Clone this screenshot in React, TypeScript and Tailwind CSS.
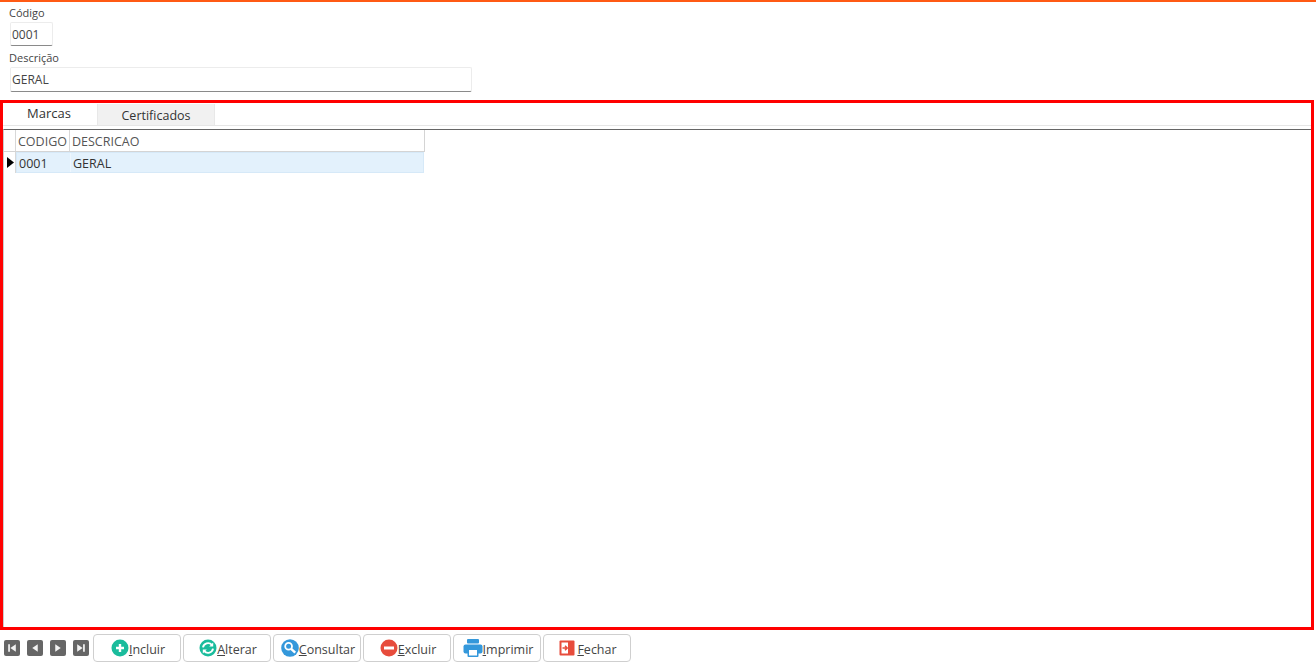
const font = { fontFamily: '"Open Sans", "Noto Sans", sans-serif' };

function Nav({ d }: { d: string }) {
  return (
    <div className="w-[16px] h-[16px] rounded-[2px] bg-[#666666] flex items-center justify-center">
      <svg width="12" height="12" viewBox="0 0 11 11" fill="#f2f2f2"><path d={d} /></svg>
    </div>
  );
}

function Btn({ icon, u, rest }: { icon: React.ReactNode; u: string; rest: string }) {
  return (
    <div className="w-[88px] h-[28px] shrink-0 rounded-[4px] border border-[#cfcfcf] bg-white flex items-center justify-center pl-[2px] text-[12.5px] text-[#444444]">
      {icon}
      <span className="mt-[4px]"><span className="underline">{u}</span>{rest}</span>
    </div>
  );
}

const IncluirIcon = (
  <svg width="18" height="18" viewBox="0 0 18 18"><circle cx="9" cy="9" r="8.5" fill="#1abc9c" /><path d="M9 5v8M5 9h8" stroke="#fff" strokeWidth="2.4" /></svg>
);
const AlterarIcon = (
  <svg width="18" height="18" viewBox="0 0 18 18"><circle cx="9" cy="9" r="8.5" fill="#1abc9c" /><path d="M4 8.4A5.1 5.1 0 0 1 12.8 5.8M14 9.6A5.1 5.1 0 0 1 5.2 12.2" fill="none" stroke="#fff" strokeWidth="1.9" /><path d="M14.2 3.4v4h-4zM3.8 14.6v-4h4z" fill="#fff" /></svg>
);
const ConsultarIcon = (
  <svg width="18" height="18" viewBox="0 0 18 18"><circle cx="9" cy="9" r="8.8" fill="#3498db" /><circle cx="7.6" cy="7.2" r="3.4" fill="none" stroke="#fff" strokeWidth="1.8" /><path d="M10.2 9.8l4 3.8" stroke="#fff" strokeWidth="2.4" /></svg>
);
const ExcluirIcon = (
  <svg width="18" height="18" viewBox="0 0 18 18"><circle cx="9" cy="9" r="8.5" fill="#e74c3c" /><rect x="4" y="7.5" width="10" height="3" fill="#fff" /></svg>
);
const ImprimirIcon = (
  <svg width="20" height="20" viewBox="0 0 20 20"><rect x="4" y="1" width="12" height="4.5" rx="1" fill="#3498db" /><rect x="0.5" y="6.5" width="19" height="9" rx="2" fill="#3498db" /><rect x="4.5" y="11.5" width="11" height="7.5" rx="1" fill="#3498db" /><rect x="6" y="12" width="8" height="5.5" fill="#fff" /></svg>
);
const FecharIcon = (
  <svg width="16" height="16" viewBox="0 0 16 16" className="mr-[2px]"><rect x="0.5" y="0.5" width="15" height="15" rx="1" fill="#e74c3c" /><rect x="2.5" y="2.5" width="6.5" height="11" fill="#fff" /><path d="M3.5 8h4M6 5.8L8.2 8 6 10.2" fill="none" stroke="#e74c3c" strokeWidth="1.5" /></svg>
);

export default function App() {
  return (
    <div className="w-[1316px] h-[662px] bg-white flex flex-col overflow-hidden text-[#444444]" style={font}>
      <div className="h-[2px] bg-[#ff5a14] shrink-0" />
      <div className="h-[98px] shrink-0 pl-[10px] flex flex-col">
        <div className="text-[11px] leading-[15px] mt-[3px] h-[17px] -ml-[1px]">Código</div>
        <div className="w-[43px] h-[24px] border border-[#ececec] border-b-[#8a8a8a] rounded-[2px] text-[12px] leading-[23px] pl-[1px]">0001</div>
        <div className="text-[11px] leading-[15px] mt-[4px] h-[17px] -ml-[1px]">Descrição</div>
        <div className="w-[462px] h-[25px] border border-[#ececec] border-b-[#8a8a8a] rounded-[2px] text-[12px] leading-[23px] pl-[1px]">GERAL</div>
      </div>
      <div className="w-[1314px] h-[530px] shrink-0 border-[3px] border-[#ff0000] flex flex-col">
        <div className="h-[23px] shrink-0 flex items-stretch border-b border-[#e6e6e6]">
          <div className="w-[94px] text-center text-[13px] leading-[20px] text-[#333333] pr-[2px]">Marcas</div>
          <div className="w-[118px] text-center text-[12.5px] leading-[23px] text-[#333333] bg-[#f1f1f1] mt-[1px] border-x border-[#e8e8e8]">Certificados</div>
        </div>
        <div className="h-[3px] shrink-0" />
        <div className="flex-1 border-t border-t-[#666666] border-l border-l-[#cccccc] min-h-0">
          <div className="w-[421px] h-[22px] flex border-b border-r border-[#d4d4d4] text-[12.5px] leading-[23px] text-[#555555]">
            <div className="w-[12px] border-r border-[#d8d8d8]" />
            <div className="w-[54px] border-r border-[#d8d8d8] pl-[2px]">CODIGO</div>
            <div className="flex-1 pl-[2px]">DESCRICAO</div>
          </div>
          <div className="w-[420px] h-[21px] flex text-[12.5px] text-[#333333]">
            <div className="w-[12px] flex items-center justify-center pl-[1px] border-r border-[#d8d8d8]">
              <svg width="7" height="11" viewBox="0 0 7 11" fill="#000"><path d="M0 0l7 5.5-7 5.5z" /></svg>
            </div>
            <div className="flex-1 flex bg-[#e3f1fc] border border-[#d6e9f8]">
              <div className="w-[54px] pl-[2px] leading-[21px] border-r border-[#eef6fd]">0001</div>
              <div className="flex-1 pl-[2px] leading-[21px]">GERAL</div>
            </div>
          </div>
        </div>
      </div>
      <div className="flex items-start gap-[2px] pl-[4px] pt-[4px]">
        <div className="flex items-center gap-[7px] mt-[6px] mr-[2px]">
          <Nav d="M2 2h1.6v7H2zM9 2v7L4 5.5z" />
          <Nav d="M8 2v7L3 5.5z" />
          <Nav d="M3 2v7l5-3.5z" />
          <Nav d="M9 2H7.4v7H9zM2 2v7l5-3.5z" />
        </div>
        <Btn icon={IncluirIcon} u="I" rest="ncluir" />
        <Btn icon={AlterarIcon} u="A" rest="lterar" />
        <Btn icon={ConsultarIcon} u="C" rest="onsultar" />
        <Btn icon={ExcluirIcon} u="E" rest="xcluir" />
        <Btn icon={ImprimirIcon} u="I" rest="mprimir" />
        <Btn icon={FecharIcon} u="F" rest="echar" />
      </div>
    </div>
  );
}
